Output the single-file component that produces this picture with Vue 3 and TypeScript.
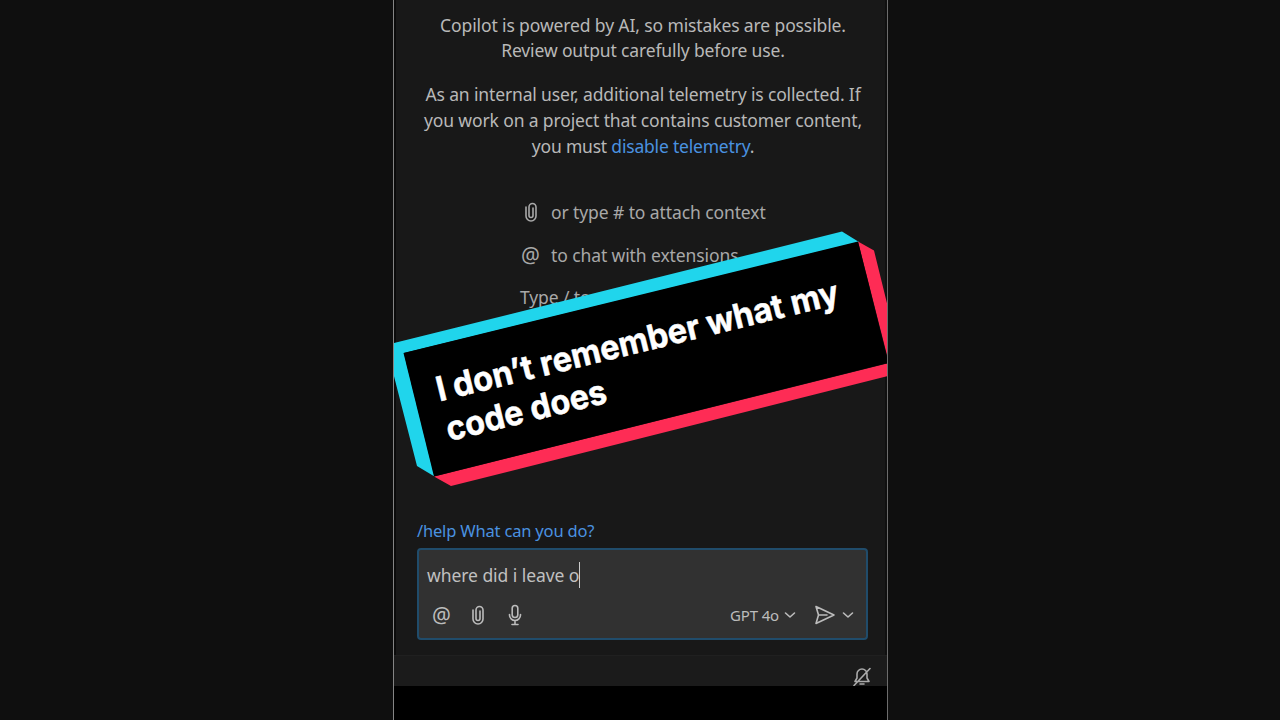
<script setup lang="ts">
interface Line {
  text: string
  link?: string
  tail?: string
  cls: string
}

const intro: Line[] = [
  { text: 'Copilot is powered by AI, so mistakes are possible.', cls: 'l1' },
  { text: 'Review output carefully before use.', cls: 'l2' },
]
const telemetry: Line[] = [
  { text: 'As an internal user, additional telemetry is collected. If', cls: 'l3' },
  { text: 'you work on a project that contains customer content,', cls: 'l4' },
  { text: 'you must ', link: 'disable telemetry', tail: '.', cls: 'l5' },
]
const clip = 'M2 5v9a5 5 0 0 0 10 0V5a3.500 3.500 0 0 0-7 0v8.500a2 2 0 0 0 4 0V6'
</script>

<template>
  <main class="stage">
    <section class="phone">
      <div class="chat">
        <p class="para intro">
          <span v-for="l in intro" :key="l.cls" class="line" :class="l.cls">{{ l.text }}</span>
        </p>
        <p class="para">
          <span v-for="l in telemetry" :key="l.cls" class="line" :class="l.cls">{{ l.text }}<a v-if="l.link">{{ l.link }}</a>{{ l.tail }}</span>
        </p>
        <div class="tips">
          <div class="tip">
            <svg class="tip-icon" width="22" height="22" viewBox="-4 -1 22 22"><path :d="clip" /></svg>
            <span>or type # to attach context</span>
          </div>
          <div class="tip">
            <span class="tip-icon at">@</span>
            <span>to chat with extensions</span>
          </div>
          <div class="tip"><span>Type / to use commands</span></div>
        </div>
        <div class="spacer"></div>
        <div class="help">/help What can you do?</div>
        <div class="input">
          <div class="prompt"><span>where did i leave o</span><i class="caret"></i></div>
          <div class="tools">
            <span class="at tool-at">@</span>
            <svg class="tool-clip" width="20" height="22" viewBox="-3 -1 20 22"><path :d="clip" /></svg>
            <svg class="tool-mic" width="16" height="22" viewBox="0 0 16 22">
              <rect x="5.200" y="1.500" width="5.600" height="12" rx="2.800" />
              <path d="M2.500 10.500v.5a5.500 5.500 0 0 0 11 0v-.5M8 16.500v4M5 20.500h6" />
            </svg>
            <span class="model">GPT 4o</span>
            <svg class="chev" width="12" height="8" viewBox="0 0 12 8"><path d="M1.500 2l4.500 4 4.500-4" /></svg>
            <svg class="send" width="22" height="20" viewBox="0 0 22 20"><path d="M2 1.500L20 10 2 18.500 4.500 10zM4.500 10H13" /></svg>
            <svg class="chev" width="12" height="8" viewBox="0 0 12 8"><path d="M1.500 2l4.500 4 4.500-4" /></svg>
          </div>
        </div>
        <div class="status">
          <svg width="22" height="22" viewBox="0 0 22 22">
            <path d="M4 15.500h14l-2-3.500V8a5 5 0 0 0-10 0v4zM9 18h4M3 19.500L19 2.500" />
          </svg>
        </div>
      </div>
      <div class="bottom"></div>
      <svg class="banner" width="495" height="270" viewBox="393 225 495 270">
        <path fill="#20d5ec" d="M386 345L842 231.500 859 242 404 353 434.500 476.500 417 466z" />
        <path fill="#fe2c55" d="M858 241.500L874 250.500 904 372 451 486 434 476.500 889 363z" />
        <path fill="#000" d="M403.500 353L858 241.500 888.500 363 434 476.500z" />
        <g fill="#fff" stroke="#fff" stroke-width="0.500" transform="translate(439.500 401.500) rotate(-13.740)">
          <text x="0" y="0" textLength="413" lengthAdjust="spacingAndGlyphs">I don’t remember what my</text>
          <text x="0" y="41" textLength="164" lengthAdjust="spacingAndGlyphs">code does</text>
        </g>
      </svg>
    </section>
  </main>
</template>

<style>
html, body { margin: 0; background: #0f0f0f; }
</style>

<style scoped>
.stage {
  width: 1280px; height: 720px; overflow: hidden; background: #0f0f0f;
  display: flex; justify-content: center;
  font-family: "Noto Sans", "Open Sans", sans-serif; color: #b8b8b8;
}
.phone {
  position: relative; box-sizing: border-box; width: 495px; height: 720px; margin-left: 1px;
  border-left: 1px solid #858585; border-right: 1px solid #6c6c6c;
  background: #181818; overflow: hidden; display: flex; flex-direction: column;
}
.chat { height: 686px; display: flex; flex-direction: column; box-shadow: inset 2px 0 #0b0b0b, inset -2px 0 #101010; }
.bottom { flex: 1; background: #000; }
.para { margin: 0 0 18.500px; padding-left: 5px; text-align: center; font-size: 17.500px; }
.intro { padding-top: 12.500px; }
.line { display: block; height: 25.600px; line-height: 25.600px; white-space: nowrap; }
a, .help { color: #4a92e0; }
.l1 { letter-spacing: -0.120px; }
.l2 { letter-spacing: -0.140px; }
.l3 { letter-spacing: -0.140px; }
.l4 { letter-spacing: -0.130px; }
.l5 { letter-spacing: -0.200px; position: relative; top: 1px; }
.tips { padding: 13.500px 0 0 126px; font-size: 17.500px; letter-spacing: -0.100px; color: #a8a8a8; }
.tip { height: 42.500px; display: flex; align-items: center; white-space: nowrap; }
.tip-icon { width: 22px; margin-right: 9px; }
.tip .at { box-sizing: border-box; padding-left: 1px; }
.at { font-size: 21px; letter-spacing: 0; line-height: 20px; }
svg { flex: none; fill: none; stroke: currentColor; stroke-width: 1.600; stroke-linejoin: round; stroke-linecap: round; }
.spacer { flex: 1; }
.help { margin: 0 0 5px 23px; line-height: 24px; font-size: 16.500px; letter-spacing: -0.180px; white-space: nowrap; }
.input {
  box-sizing: border-box; width: 451px; height: 92px; margin-left: 23px; flex: none;
  background: #313131; border: 2px solid #204c6b; border-radius: 4px; display: flex; flex-direction: column;
}
.prompt { height: 50px; padding-left: 8px; display: flex; align-items: center; font-size: 17.500px; letter-spacing: -0.060px; color: #c0c0c0; white-space: nowrap; }
.caret { width: 1px; height: 26px; background: #ccc; }
.tools { height: 30px; padding: 0 12px 0 13px; display: flex; align-items: center; color: #bcbcbc; }
.tool-at { width: 20px; }
.tool-clip { margin-left: 16px; }
.tool-mic { margin-left: 19px; }
.model { margin-left: auto; font-size: 15px; letter-spacing: -0.150px; }
.model + .chev { margin-left: 5px; }
.send { margin: 0 6px 0 18px; }
.status {
  box-sizing: border-box; height: 31px; margin-top: 15px; flex: none; border-top: 1px solid #202020; background: #1b1b1b;
  display: flex; justify-content: flex-end; padding: 10px 14px 0 0; overflow: hidden; color: #aaa;
}
.banner { position: absolute; left: -1px; top: 225px; stroke: none; }
.banner text { font-family: Inter, "Liberation Sans", sans-serif; font-weight: 700; font-size: 34px; }
</style>
